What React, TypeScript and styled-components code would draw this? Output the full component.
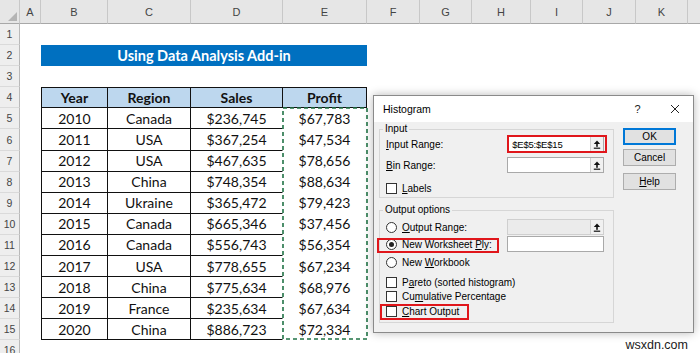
import styled, { createGlobalStyle } from "styled-components";

const GlobalStyle = createGlobalStyle`
  html, body {
    margin: 0;
    padding: 0;
    background: #fff;
    overflow: hidden;
  }
`;

const columns = ["A", "B", "C", "D", "E", "F", "G", "H", "I", "J", "K", "L"];

const rows = [
  ["2010", "Canada", "$236,745", "$67,783"],
  ["2011", "USA", "$367,254", "$47,534"],
  ["2012", "USA", "$467,635", "$78,656"],
  ["2013", "China", "$748,354", "$88,634"],
  ["2014", "Ukraine", "$365,472", "$79,423"],
  ["2015", "Canada", "$665,346", "$37,456"],
  ["2016", "Canada", "$556,743", "$56,354"],
  ["2017", "USA", "$778,655", "$67,234"],
  ["2018", "China", "$775,634", "$68,976"],
  ["2019", "France", "$235,634", "$67,634"],
  ["2020", "China", "$886,723", "$72,334"],
];

const Sheet = styled.div`
  position: relative;
  display: grid;
  grid-template-columns: 20px 21px 67px 83px 92px 84px 53px 52px 59px 52px 53px 52px 60px;
  grid-template-rows: 24px repeat(16, 21.1px);
  width: 700px;
  height: 353px;
  overflow: hidden;
  background: #fff;
`;

const Corner = styled.div`
  grid-row: 1;
  grid-column: 1;
  background: #e6e6e6;
  border-right: 1px solid #c8c8c8;
  border-bottom: 1px solid #a8a8a8;
  display: flex;
  align-items: flex-end;
  justify-content: flex-end;
  padding: 0 2px 2px 0;
`;

const ColHead = styled.div<{ $col: number }>`
  grid-row: 1;
  grid-column: ${(p) => p.$col};
  background: #e6e6e6;
  border-right: 1px solid #c8c8c8;
  border-bottom: 1px solid #a8a8a8;
  display: flex;
  align-items: center;
  justify-content: center;
  font-family: "Liberation Sans", Arial, sans-serif;
  font-size: 11px;
  color: #444;
`;

const RowHead = styled.div<{ $row: number }>`
  grid-row: ${(p) => p.$row};
  grid-column: 1;
  background: #eeeeee;
  border-right: 1px solid #b9b9b9;
  border-bottom: 1px solid #dadada;
  display: flex;
  align-items: center;
  justify-content: center;
  font-family: "Liberation Sans", Arial, sans-serif;
  font-size: 10.5px;
  color: #444;
`;

const Title = styled.div`
  grid-row: 3;
  grid-column: 3 / 7;
  background: #0070c0;
  color: #fff;
  font-family: Lato, "Open Sans", sans-serif;
  font-weight: 700;
  font-size: 14.5px;
  display: flex;
  align-items: center;
  justify-content: center;
`;

const Table = styled.div`
  grid-row: 5 / 17;
  grid-column: 3 / 7;
  display: grid;
  grid-template-columns: 66px 83px 92px 84px;
  grid-template-rows: repeat(12, 1fr);
  border-left: 1px solid #111;
  border-top: 1px solid #111;
  font-family: Lato, "Open Sans", sans-serif;
  font-size: 14px;
  color: #111;
`;

const Cell = styled.div<{
  $r: number;
  $c: number;
  $head?: boolean;
  $noRight?: boolean;
  $noBottom?: boolean;
}>`
  grid-row: ${(p) => p.$r};
  grid-column: ${(p) => p.$c};
  display: flex;
  align-items: center;
  justify-content: center;
  background: ${(p) => (p.$head ? "#bdd7ee" : "#fff")};
  font-weight: ${(p) => (p.$head ? 700 : 400)};
  border-right: 1px solid ${(p) => (p.$noRight ? "transparent" : "#111")};
  border-bottom: 1px solid ${(p) => (p.$noBottom ? "transparent" : "#111")};
`;

const Marquee = styled.svg`
  grid-column: 4;
  grid-row: 2 / 13;
  margin: -1px 0 0 -1px;
  pointer-events: none;
  z-index: 1;
`;

const Dialog = styled.div`
  position: absolute;
  left: 373px;
  top: 95px;
  width: 321px;
  height: 238px;
  box-sizing: border-box;
  border: 1px solid #8a8a8a;
  background: #f0f0f0;
  box-shadow: 0 0 9px rgba(0, 0, 0, 0.28);
  display: flex;
  flex-direction: column;
  font-family: "Liberation Sans", Arial, sans-serif;
  font-size: 10px;
  color: #000;
  z-index: 2;
`;

const TitleBar = styled.div`
  height: 26px;
  background: #fff;
  display: flex;
  align-items: center;
  padding-left: 9px;
  font-size: 10.5px;
`;

const TitleText = styled.span`
  flex: 1;
`;

const TitleButton = styled.span`
  width: 37px;
  display: flex;
  align-items: center;
  justify-content: center;
  font-size: 11px;
  color: #222;
`;

const Body = styled.div`
  display: flex;
  gap: 9px;
  padding: 1px 17px 0 5px;
`;

const Groups = styled.div`
  width: 236px;
  display: flex;
  flex-direction: column;
  gap: 6px;
`;

const Group = styled.fieldset`
  margin: 0;
  padding: 0 9px 3px 6px;
  border: 1px solid #d6d6d6;
  min-width: 0;
`;

const Legend = styled.legend`
  padding: 0 2px;
  margin-left: -3px;
  line-height: 12px;
  font-size: 10px;
`;

const FieldRow = styled.div<{ $top?: number }>`
  display: flex;
  align-items: center;
  justify-content: space-between;
  height: 16px;
  margin-top: ${(p) => p.$top ?? 0}px;
`;

const Field = styled.div<{ $disabled?: boolean }>`
  width: 97px;
  height: 16px;
  box-sizing: border-box;
  border: 1px solid ${(p) => (p.$disabled ? "#cfcfcf" : "#a9a9a9")};
  background: ${(p) => (p.$disabled ? "#ebebeb" : "#fff")};
  display: flex;
  align-items: center;
  font-size: 9.5px;
`;

const FieldText = styled.span`
  flex: 1;
  padding-left: 4px;
  letter-spacing: -0.2px;
`;

const RefButton = styled.span`
  width: 12px;
  height: 14px;
  border-left: 1px solid #d0d0d0;
  background: #f1f1f1;
  display: flex;
  align-items: center;
  justify-content: center;
`;

const Option = styled.div<{ $h?: number; $top?: number }>`
  display: flex;
  align-items: center;
  gap: 5px;
  height: ${(p) => p.$h ?? 14}px;
  margin-top: ${(p) => p.$top ?? 0}px;
`;

const Box = styled.span`
  width: 11px;
  height: 11px;
  box-sizing: border-box;
  border: 1px solid #333;
  background: #fff;
  flex: none;
`;

const Radio = styled.span<{ $on?: boolean }>`
  width: 11px;
  height: 11px;
  box-sizing: border-box;
  border-radius: 50%;
  border: 1px solid #333;
  background: #fff;
  flex: none;
  display: flex;
  align-items: center;
  justify-content: center;
  &::after {
    content: "";
    width: 5px;
    height: 5px;
    border-radius: 50%;
    background: ${(p) => (p.$on ? "#222" : "transparent")};
  }
`;

const Buttons = styled.div`
  width: 53px;
  display: flex;
  flex-direction: column;
  gap: 4px;
  padding-top: 5px;
`;

const Button = styled.div<{ $focus?: boolean; $gapTop?: number }>`
  height: 17px;
  box-sizing: border-box;
  border: ${(p) => (p.$focus ? "2px solid #0078d7" : "1px solid #adadad")};
  background: #e1e1e1;
  display: flex;
  align-items: center;
  justify-content: center;
  font-size: 10px;
  margin-top: ${(p) => p.$gapTop ?? 0}px;
`;

const Mark = styled.div<{ $x: number; $y: number; $w: number; $h: number }>`
  position: absolute;
  left: ${(p) => p.$x}px;
  top: ${(p) => p.$y}px;
  width: ${(p) => p.$w}px;
  height: ${(p) => p.$h}px;
  box-sizing: border-box;
  border: 2px solid #e0161b;
  pointer-events: none;
`;

const Watermark = styled.div`
  position: absolute;
  right: 12px;
  bottom: 1px;
  font-family: "Liberation Sans", Arial, sans-serif;
  font-size: 12.5px;
  color: #1a1a1a;
  z-index: 3;
`;

function UpIcon() {
  return (
    <svg width="8" height="9" viewBox="0 0 8 9">
      <polygon points="4,0.5 0.8,4 7.2,4" fill="#111" />
      <rect x="3.2" y="3.8" width="1.6" height="3" fill="#111" />
      <rect x="0.8" y="7.6" width="6.4" height="1.2" fill="#111" />
    </svg>
  );
}

function CloseIcon() {
  return (
    <svg width="10" height="10" viewBox="0 0 10 10">
      <path d="M1 1 L9 9 M9 1 L1 9" stroke="#222" strokeWidth="1" />
    </svg>
  );
}

export default function App() {
  const marqueeH = Math.round(11 * 21.1) + 1;
  return (
    <>
      <GlobalStyle />
      <Sheet>
        <Corner>
          <svg width="9" height="9" viewBox="0 0 9 9">
            <polygon points="9,0 9,9 0,9" fill="#b4b4b4" />
          </svg>
        </Corner>
        {columns.map((c, i) => (
          <ColHead key={c} $col={i + 2}>
            {c}
          </ColHead>
        ))}
        {Array.from({ length: 16 }, (_, i) => (
          <RowHead key={i} $row={i + 2}>
            {i + 1}
          </RowHead>
        ))}

        <Title>Using Data Analysis Add-in</Title>

        <Table>
          {["Year", "Region", "Sales", "Profit"].map((h, j) => (
            <Cell key={h} $r={1} $c={j + 1} $head>
              {h}
            </Cell>
          ))}
          {rows.map((r, i) =>
            r.map((v, j) => (
              <Cell
                key={r[0] + j}
                $r={i + 2}
                $c={j + 1}
                $noRight={j >= 2}
                $noBottom={j === 3}
              >
                {v}
              </Cell>
            ))
          )}
          <Marquee width="86" height={marqueeH} viewBox={`0 0 86 ${marqueeH}`}>
            <rect
              x="1"
              y="1"
              width="84"
              height={marqueeH - 2}
              fill="none"
              stroke="#217346"
              strokeWidth="1.6"
              strokeDasharray="4 3"
            />
          </Marquee>
        </Table>

        <Dialog>
          <TitleBar>
            <TitleText>Histogram</TitleText>
            <TitleButton>?</TitleButton>
            <TitleButton>
              <CloseIcon />
            </TitleButton>
          </TitleBar>
          <Body>
            <Groups>
              <Group>
                <Legend>Input</Legend>
                <FieldRow $top={1}>
                  <span>
                    <u>I</u>nput Range:
                  </span>
                  <Field>
                    <FieldText>$E$5:$E$15</FieldText>
                    <RefButton>
                      <UpIcon />
                    </RefButton>
                  </Field>
                </FieldRow>
                <FieldRow $top={5}>
                  <span>
                    <u>B</u>in Range:
                  </span>
                  <Field>
                    <FieldText />
                    <RefButton>
                      <UpIcon />
                    </RefButton>
                  </Field>
                </FieldRow>
                <Option $h={12} $top={9}>
                  <Box />
                  <span>
                    <u>L</u>abels
                  </span>
                </Option>
              </Group>

              <Group>
                <Legend>Output options</Legend>
                <FieldRow $top={3}>
                  <Option $h={16}>
                    <Radio />
                    <span>
                      <u>O</u>utput Range:
                    </span>
                  </Option>
                  <Field $disabled>
                    <FieldText />
                    <RefButton>
                      <UpIcon />
                    </RefButton>
                  </Field>
                </FieldRow>
                <FieldRow $top={1}>
                  <Option $h={16}>
                    <Radio $on />
                    <span>
                      New Worksheet <u>P</u>ly:
                    </span>
                  </Option>
                  <Field />
                </FieldRow>
                <Option $h={16} $top={2}>
                  <Radio />
                  <span>
                    New <u>W</u>orkbook
                  </span>
                </Option>
                <Option $top={5}>
                  <Box />
                  <span>
                    P<u>a</u>reto (sorted histogram)
                  </span>
                </Option>
                <Option>
                  <Box />
                  <span>
                    Cu<u>m</u>ulative Percentage
                  </span>
                </Option>
                <Option $h={15} $top={1}>
                  <Box />
                  <span>
                    <u>C</u>hart Output
                  </span>
                </Option>
              </Group>
            </Groups>
            <Buttons>
              <Button $focus>OK</Button>
              <Button>Cancel</Button>
              <Button $gapTop={3}>
                <span>
                  <u>H</u>elp
                </span>
              </Button>
            </Buttons>
          </Body>
          <Mark $x={133} $y={39} $w={100} $h={18} />
          <Mark $x={3} $y={142} $w={122} $h={15} />
          <Mark $x={6} $y={208} $w={89} $h={16} />
        </Dialog>

        <Watermark>wsxdn.com</Watermark>
      </Sheet>
    </>
  );
}
